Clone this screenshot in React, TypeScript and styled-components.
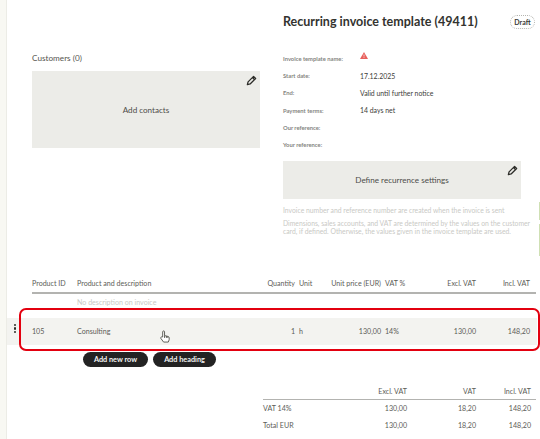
import React from "react";
import styled, { createGlobalStyle } from "styled-components";

const Global = createGlobalStyle`
  html, body { margin: 0; padding: 0; background: #fff; }
  body { font-family: "Lato", "Noto Sans", sans-serif; color: #55554f; }
`;

const Page = styled.div`
  position: relative;
  width: 540px;
  height: 439px;
  overflow: hidden;
  display: flex;
  background: #fff;
`;
const SideStrip = styled.div`
  width: 6px;
  background: #f8f8f3;
  border-right: 1px solid #ecece6;
  flex: none;
`;
const Content = styled.div`
  flex: 1;
  min-width: 0;
  display: flex;
  flex-direction: column;
`;
const Top = styled.div`
  display: grid;
  grid-template-columns: 228px 1fr;
  column-gap: 23px;
  padding: 0 6px 0 25px;
  height: 275px;
`;
const LeftCol = styled.section`
  display: flex;
  flex-direction: column;
  padding-top: 52px;
`;
const SectionTitle = styled.h3`
  margin: 0 0 7px;
  font-size: 8.2px;
  line-height: 12px;
  font-weight: 400;
  color: #55554f;
`;
const EditBox = styled.div<{ $h: number; $w?: number }>`
  position: relative;
  height: ${(p) => p.$h}px;
  width: ${(p) => (p.$w ? `${p.$w}px` : "auto")};
  background: #ecece8;
  display: flex;
  align-items: center;
  justify-content: center;
  font-size: 8.1px;
  color: #4c4c48;
`;
const EditIcon = styled.svg`
  position: absolute;
  top: 4px;
  right: 3px;
  width: 11px;
  height: 11px;
`;
const RightCol = styled.section`
  display: flex;
  flex-direction: column;
`;
const TitleRow = styled.div`
  display: flex;
  align-items: center;
  justify-content: space-between;
  padding-top: 14px;
  height: 15px;
  margin-bottom: 21px;
`;
const Title = styled.h1`
  margin: 0;
  font-size: 12.5px;
  line-height: 16px;
  font-weight: 700;
  color: #33332f;
`;
const Badge = styled.span`
  box-sizing: border-box;
  width: 25px;
  height: 14px;
  border: 1px dotted #b5b5b0;
  border-radius: 8px;
  display: flex;
  align-items: center;
  justify-content: center;
  font-size: 7px;
  font-weight: 700;
  color: #3c3c38;
`;
const Fields = styled.dl`
  margin: 0 0 8px;
  display: grid;
  grid-template-columns: 77px 1fr;
  grid-auto-rows: 17.2px;
  align-items: center;
`;
const FieldLabel = styled.dt`
  font-size: 5.8px;
  font-weight: 700;
  color: #85857f;
`;
const FieldValue = styled.dd`
  margin: 0;
  font-size: 6.9px;
  color: #3c3c38;
  height: 100%;
  display: flex;
  align-items: center;
`;
const Note = styled.p`
  margin: 5px 0 0;
  width: 252px;
  font-size: 6.8px;
  line-height: 8px;
  color: #c9c9c5;
  &:first-of-type { margin-top: 7px; }
`;
const Table = styled.div`
  display: flex;
  flex-direction: column;
`;
const ItemGrid = styled.div`
  display: grid;
  grid-template-columns: 45px 173px 45px 20px 66px 49px 46px 54px;
  margin: 0 4px 0 25px;
  align-items: center;
`;
const HeadRow = styled(ItemGrid)`
  height: 16px;
  padding-bottom: 1px;
  border-bottom: 2px solid #b3b3b0;
`;
const Cell = styled.div<{ $right?: boolean; $inset?: boolean; $muted?: boolean }>`
  font-size: 7.1px;
  color: ${(p) => (p.$muted ? "#c9c9c5" : "#5c5c57")};
  text-align: ${(p) => (p.$right ? "right" : "left")};
  padding-left: ${(p) => (p.$inset ? 4 : 0)}px;
  white-space: nowrap;
  min-width: 0;
  direction: ${(p) => (p.$right ? "rtl" : "ltr")};
  & > span { unicode-bidi: plaintext; direction: ltr; }
`;
const DescRow = styled(ItemGrid)`
  height: 16px;
  margin-bottom: 8px;
`;
const ItemBand = styled.div`
  height: 27px;
  background: #f3f3f0;
  margin-right: 3px;
  position: relative;
  display: flex;
  align-items: center;
`;
const Grip = styled.div`
  position: absolute;
  left: 7px;
  top: 6px;
  display: flex;
  flex-direction: column;
  gap: 1px;
  & > i { display: block; width: 2.4px; height: 2.4px; background: #2c2c28; border-radius: 50%; }
`;
const BandGrid = styled(ItemGrid)`
  flex: 1;
`;
const Actions = styled.div`
  display: flex;
  gap: 5px;
  margin: 7px 0 0 76px;
`;
const DarkButton = styled.button<{ $w: number }>`
  width: ${(p) => p.$w}px;
  height: 15px;
  border: 0;
  padding: 0;
  border-radius: 8px;
  background: #232323;
  color: #f4f4f4;
  font: 700 7.3px "Lato", sans-serif;
`;
const Summary = styled.div`
  margin: 17px 4px 0 256px;
  display: flex;
  flex-direction: column;
`;
const SumGrid = styled.div`
  display: grid;
  grid-template-columns: 58px 86px 69px 55px;
  align-items: center;
  height: 17px;
`;
const SumHead = styled(SumGrid)`
  height: 15px;
  border-bottom: 1px solid #b3b3b0;
`;
const Highlight = styled.div`
  position: absolute;
  box-sizing: border-box;
  left: 19px;
  top: 308px;
  width: 521px;
  height: 43px;
  border: 2px solid #e3000f;
  border-radius: 7px;
  pointer-events: none;
`;
const Cursor = styled.svg`
  position: absolute;
  left: 159px;
  top: 330px;
  width: 12px;
  height: 13px;
`;
const WarnIcon = styled.svg`
  width: 8px;
  height: 7px;
  position: relative;
  top: -3px;
`;
const EdgeMark = styled.div<{ $top: number; $h: number }>`
  position: absolute;
  right: 0;
  top: ${(p) => p.$top}px;
  width: 1px;
  height: ${(p) => p.$h}px;
  background: #cfe0b4;
`;

const Pencil = () => (
  <EditIcon viewBox="0 0 24 24" fill="none" stroke="#2c2c28" strokeWidth="2.8" strokeLinejoin="round">
    <path d="M3 21l1.5-6L16.5 3l4.5 4.5L9 19.5z" />
    <path d="M14 5.5l4.5 4.5" />
  </EditIcon>
);

const fields: [string, React.ReactNode][] = [
  ["Invoice template name:", (
    <WarnIcon viewBox="0 0 16 14"><path d="M8 0l8 14H0z" fill="#e8605c" /><path d="M8 5v4M8 10.5v1.5" stroke="#fff" strokeWidth="1.4" /></WarnIcon>
  )],
  ["Start date:", "17.12.2025"],
  ["End:", "Valid until further notice"],
  ["Payment terms:", "14 days net"],
  ["Our reference:", ""],
  ["Your reference:", ""],
];

const headers: [string, boolean, boolean][] = [
  ["Product ID", false, false],
  ["Product and description", false, false],
  ["Quantity", true, false],
  ["Unit", false, true],
  ["Unit price (EUR)", true, false],
  ["VAT %", false, true],
  ["Excl. VAT", true, false],
  ["Incl. VAT", true, false],
];
const item: [string, boolean, boolean][] = [
  ["105", false, false],
  ["Consulting", false, false],
  ["1", true, false],
  ["h", false, true],
  ["130,00", true, false],
  ["14%", false, true],
  ["130,00", true, false],
  ["148,20", true, false],
];
const sums = [
  ["VAT 14%", "130,00", "18,20", "148,20"],
  ["Total EUR", "130,00", "18,20", "148,20"],
];

export default function App() {
  return (
    <Page>
      <Global />
      <SideStrip />
      <Content>
        <Top>
          <LeftCol>
            <SectionTitle>Customers (0)</SectionTitle>
            <EditBox $h={77}>
              Add contacts
              <Pencil />
            </EditBox>
          </LeftCol>
          <RightCol>
            <TitleRow>
              <Title>Recurring invoice template (49411)</Title>
              <Badge>Draft</Badge>
            </TitleRow>
            <Fields>
              {fields.map(([l, v]) => (
                <React.Fragment key={l}>
                  <FieldLabel>{l}</FieldLabel>
                  <FieldValue>{v}</FieldValue>
                </React.Fragment>
              ))}
            </Fields>
            <EditBox $h={38} $w={238}>
              Define recurrence settings
              <Pencil />
            </EditBox>
            <Note>Invoice number and reference number are created when the invoice is sent</Note>
            <Note>Dimensions, sales accounts, and VAT are determined by the values on the customer card, if defined. Otherwise, the values given in the invoice template are used.</Note>
          </RightCol>
        </Top>
        <Table>
          <HeadRow>
            {headers.map(([t, r, i]) => (
              <Cell key={t} $right={r} $inset={i}><span>{t}</span></Cell>
            ))}
          </HeadRow>
          <DescRow>
            <span />
            <Cell $muted>No description on invoice</Cell>
          </DescRow>
          <ItemBand>
            <Grip><i /><i /><i /></Grip>
            <BandGrid>
              {item.map(([t, r, i], n) => (
                <Cell key={n} $right={r} $inset={i}><span>{t}</span></Cell>
              ))}
            </BandGrid>
          </ItemBand>
          <Actions>
            <DarkButton $w={65}>Add new row</DarkButton>
            <DarkButton $w={63}>Add heading</DarkButton>
          </Actions>
        </Table>
        <Summary>
          <SumHead>
            <span />
            <Cell $right><span>Excl. VAT</span></Cell>
            <Cell $right><span>VAT</span></Cell>
            <Cell $right><span>Incl. VAT</span></Cell>
          </SumHead>
          {sums.map((r) => (
            <SumGrid key={r[0]}>
              <Cell>{r[0]}</Cell>
              {r.slice(1).map((v, i) => (
                <Cell key={i} $right><span>{v}</span></Cell>
              ))}
            </SumGrid>
          ))}
        </Summary>
      </Content>
      <EdgeMark $top={202} $h={18} />
      <EdgeMark $top={224} $h={32} />
      <Highlight />
      <Cursor viewBox="0 0 24 28" fill="#fff" stroke="#55554f" strokeWidth="2" strokeLinejoin="round">
        <path d="M7 15V4a2 2 0 0 1 4 0v8l8 2a3 3 0 0 1 2 3v4l-2 5H9l-6-8c-1-2 1-4 4-3z" />
        <path d="M11 12v5M15 13v4M18 14v3" />
      </Cursor>
    </Page>
  );
}
